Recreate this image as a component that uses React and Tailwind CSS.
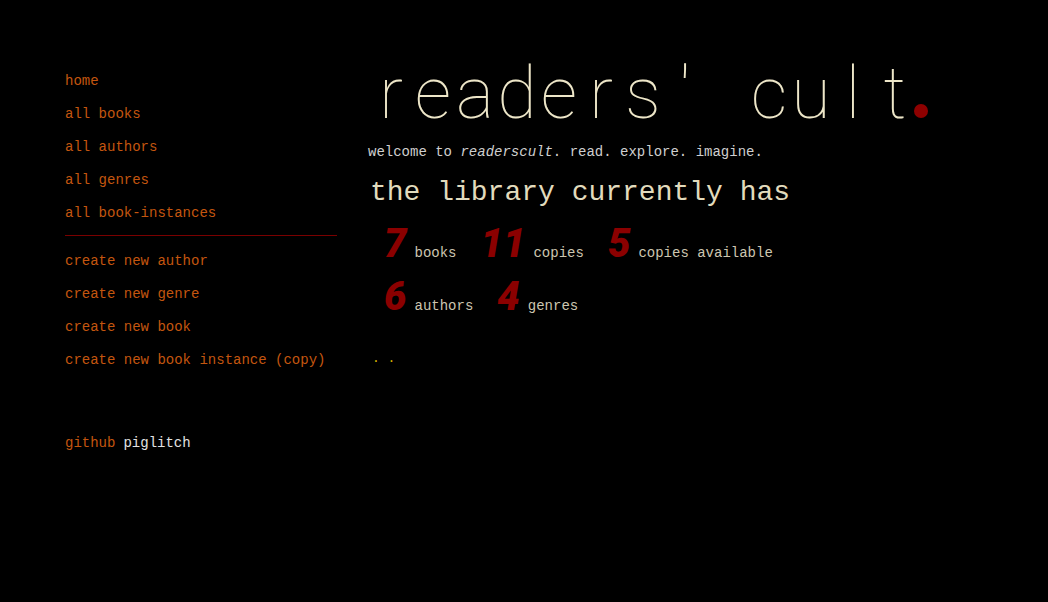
import React from "react";

const mono = { fontFamily: '"Liberation Mono", "DejaVu Sans Mono", monospace' };

const navTop = ["home", "all books", "all authors", "all genres", "all book-instances"];
const navBottom = ["create new author", "create new genre", "create new book", "create new book instance (copy)"];

function NavItem({ children }) {
  return (
    <a href="#" className="h-[33px] flex items-center text-[14px] text-[#c4560f] whitespace-nowrap">
      {children}
    </a>
  );
}

function Stat({ n, label }) {
  return (
    <div className="flex items-baseline gap-[8px]">
      <span className="font-['Roboto',sans-serif] font-black italic text-[40px] leading-none text-[#8b0000]">{n}</span>
      <span className="text-[14px] text-[#cdc6b0]">{label}</span>
    </div>
  );
}

export default function App() {
  const title = "readers' cult";
  return (
    <div className="min-h-screen w-full bg-black flex" style={mono}>
      <nav className="w-[272px] ml-[65px] pt-[65px] flex flex-col shrink-0">
        {navTop.map((t) => (
          <NavItem key={t}>{t}</NavItem>
        ))}
        <div className="h-px bg-[#7a0000] mt-[5px] mb-[9px]" />
        {navBottom.map((t) => (
          <NavItem key={t}>{t}</NavItem>
        ))}
        <div className="mt-[50px] h-[33px] flex items-center text-[14px] whitespace-nowrap">
          <span className="text-[#c4560f]">github</span>
          <span className="text-[#e2e2e2] ml-[8px]">piglitch</span>
        </div>
      </nav>

      <main className="ml-[31px] pt-[58px] flex flex-col">
        <h1 className="flex items-baseline leading-none text-[72px] font-thin text-[#ede6c8] font-['Roboto',sans-serif] ml-[2px]">
          {title.split("").map((c, i) => (
            <span key={i} className="inline-block w-[42px] text-center">
              {c === " " ? "\u00a0" : c}
            </span>
          ))}
          <span className="inline-block w-[14px] h-[14px] rounded-full bg-[#8e0000] -ml-[2px] self-end mb-[12px]" />
        </h1>

        <p className="mt-[12px] text-[14px] leading-[20px] text-[#cfcfcf] whitespace-nowrap">
          welcome to <em className="italic">readerscult</em>. read. explore. imagine.
        </p>

        <h2 className="mt-[13px] ml-[2px] text-[28px] leading-[36px] text-[#e2dbbd] whitespace-nowrap">
          the library currently has
        </h2>

        <div className="mt-[13px] pl-[16px] flex flex-col gap-[13px]">
          <div className="flex items-baseline gap-[24px]">
            <Stat n="7" label="books" />
            <Stat n="11" label="copies" />
            <Stat n="5" label="copies available" />
          </div>
          <div className="flex items-baseline gap-[24px]">
            <Stat n="6" label="authors" />
            <Stat n="4" label="genres" />
          </div>
        </div>

        <div className="mt-[32px] pl-[4px] text-[13px] leading-[20px] text-[#d8b400]">. .</div>
      </main>
    </div>
  );
}
